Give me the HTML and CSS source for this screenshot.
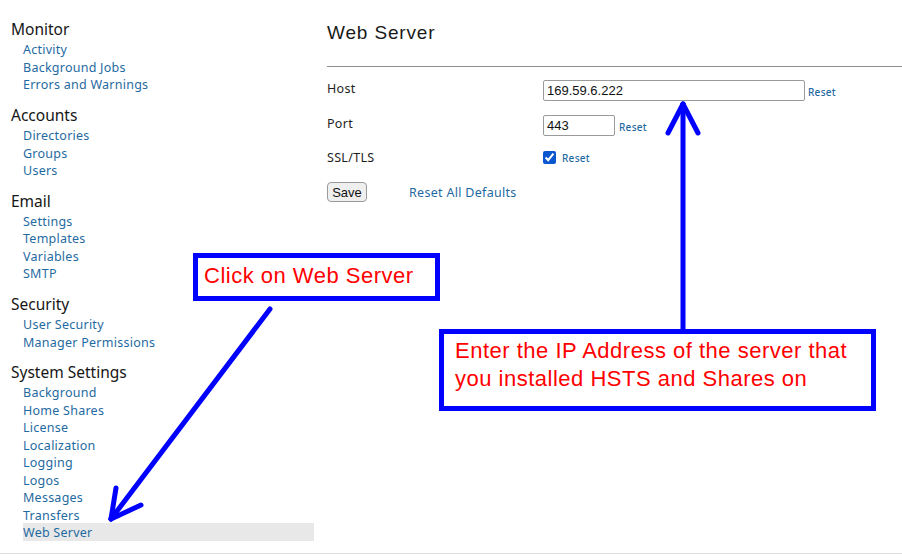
FILE: index.html
```html
<!DOCTYPE html>
<html lang="en">
<head>
<meta charset="utf-8">
<title>Web Server</title>
<link rel="stylesheet" href="styles.css">
</head>
<body>
<div class="page">
  <nav class="sidebar">
    <section class="group">
      <h2>Monitor</h2>
      <ul>
        <li><a href="#">Activity</a></li>
        <li><a href="#">Background Jobs</a></li>
        <li><a href="#">Errors and Warnings</a></li>
      </ul>
    </section>
    <section class="group">
      <h2>Accounts</h2>
      <ul>
        <li><a href="#">Directories</a></li>
        <li><a href="#">Groups</a></li>
        <li><a href="#">Users</a></li>
      </ul>
    </section>
    <section class="group">
      <h2>Email</h2>
      <ul>
        <li><a href="#">Settings</a></li>
        <li><a href="#">Templates</a></li>
        <li><a href="#">Variables</a></li>
        <li><a href="#">SMTP</a></li>
      </ul>
    </section>
    <section class="group">
      <h2>Security</h2>
      <ul>
        <li><a href="#">User Security</a></li>
        <li><a href="#">Manager Permissions</a></li>
      </ul>
    </section>
    <section class="group">
      <h2>System Settings</h2>
      <ul>
        <li><a href="#">Background</a></li>
        <li><a href="#">Home Shares</a></li>
        <li><a href="#">License</a></li>
        <li><a href="#">Localization</a></li>
        <li><a href="#">Logging</a></li>
        <li><a href="#">Logos</a></li>
        <li><a href="#">Messages</a></li>
        <li><a href="#">Transfers</a></li>
        <li class="active"><a href="#">Web Server</a></li>
      </ul>
    </section>
  </nav>
  <main class="content">
    <h1>Web Server</h1>
    <hr class="rule">
    <div class="form">
      <div class="row row-host">
        <label class="label">Host</label>
        <div class="field">
          <input class="text-input host-input" type="text" value="169.59.6.222">
          <a class="reset" href="#">Reset</a>
        </div>
      </div>
      <div class="row row-port">
        <label class="label">Port</label>
        <div class="field">
          <input class="text-input port-input" type="text" value="443">
          <a class="reset" href="#">Reset</a>
        </div>
      </div>
      <div class="row row-ssl">
        <label class="label">SSL/TLS</label>
        <div class="field">
          <input class="check" type="checkbox" checked>
          <a class="reset reset-check" href="#">Reset</a>
        </div>
      </div>
      <div class="row row-actions">
        <button class="save" type="button">Save</button>
        <a class="reset-all" href="#">Reset All Defaults</a>
      </div>
    </div>
  </main>
</div>

<svg class="arrows" width="902" height="560" viewBox="0 0 902 560">
  <g stroke="#0000ff" stroke-width="5" stroke-linecap="round" fill="none">
    <line x1="270" y1="309" x2="111" y2="519"/>
    <line x1="111" y1="519" x2="116" y2="488"/>
    <line x1="111" y1="519" x2="141" y2="505"/>
    <line x1="683" y1="331" x2="683" y2="104"/>
    <line x1="683" y1="104" x2="668" y2="133"/>
    <line x1="683" y1="104" x2="698" y2="133"/>
  </g>
</svg>
<div class="callout callout-click">Click on Web Server</div>
<div class="callout callout-ip">Enter the IP Address of the server that you installed HSTS and Shares on</div>
</body>
</html>
```

FILE: styles.css
```css
* { box-sizing: border-box; }

html, body {
  margin: 0;
  padding: 0;
  background: #ffffff;
}

body {
  width: 902px;
  height: 560px;
  overflow: hidden;
  position: relative;
  font-family: "Noto Sans", "Open Sans", sans-serif;
  color: #161616;
}

.page {
  display: flex;
  height: 554px;
  border-bottom: 1px solid #dedede;
}

/* Sidebar */
.sidebar {
  width: 314px;
  flex: none;
  padding: 19px 0 0 11px;
}

.group + .group {
  margin-top: 12px;
}

.group h2 {
  margin: 0 0 1.25px 0;
  font-size: 15.5px;
  font-weight: 400;
  line-height: 20px;
  color: #161616;
}

.group ul {
  list-style: none;
  margin: 0 0 0 12px;
  padding: 0;
}

.group li {
  height: 17.5px;
  line-height: 17.5px;
}

.group li a {
  font-size: 12.5px;
  color: #1f6aa1;
  text-decoration: none;
  letter-spacing: 0.25px;
}

.group li.active {
  background: #e8e8e8;
}

/* Content */
.content {
  flex: 1;
  padding-left: 13px;
}

.content h1 {
  margin: 21px 0 0 0;
  font-family: "Liberation Sans", Arial, sans-serif;
  font-size: 19px;
  font-weight: 400;
  line-height: 24px;
  color: #1a1a1a;
  letter-spacing: 0.85px;
}

.rule {
  margin: 21px 0 0 0;
  border: 0;
  border-top: 1px solid #8d8d8d;
  height: 0;
}

.form {
  padding-top: 13px;
}

.row {
  display: flex;
  align-items: flex-start;
}

.row-port { margin-top: 14px; }
.row-ssl { margin-top: 14px; }
.row-actions { margin-top: 15px; align-items: center; }

.label {
  width: 216px;
  flex: none;
  font-size: 12.5px;
  line-height: 18px;
  letter-spacing: 0.3px;
  color: #1e1e1e;
}

.row-ssl .label {
  margin-top: -1px;
}

.field {
  display: flex;
  align-items: center;
}

.text-input {
  height: 21px;
  margin: 0;
  padding: 0 3px;
  border: 1px solid #9a9a9a;
  border-radius: 2px;
  font-family: "Liberation Sans", Arial, sans-serif;
  font-size: 13px;
  color: #111;
  background: #fff;
}

.host-input { width: 262px; }
.port-input { width: 72px; }

.reset {
  margin-left: 3px;
  font-size: 10px;
  font-weight: 500;
  letter-spacing: 0.3px;
  color: #1f6aa1;
  text-decoration: none;
  position: relative;
  top: 1px;
}

.port-input + .reset { margin-left: 4px; }

.check {
  width: 13px;
  height: 13px;
  margin: 1px 0 0 0;
  accent-color: #0b57d0;
}

.reset-check {
  margin-left: 6px;
}

.save {
  width: 40px;
  height: 20px;
  margin: 0;
  padding: 0;
  border: 1px solid #9a9a9a;
  border-radius: 4px;
  background: #efefef;
  font-family: "Liberation Sans", Arial, sans-serif;
  font-size: 13px;
  color: #111;
}

.reset-all {
  margin-left: 42px;
  font-size: 12.5px;
  letter-spacing: 0.3px;
  color: #1f6aa1;
  text-decoration: none;
}

/* Annotation overlay */
.arrows {
  position: absolute;
  top: 0;
  left: 0;
  pointer-events: none;
}

.callout {
  position: absolute;
  border: 5px solid #0000ff;
  background: #ffffff;
  color: #ff0000;
  font-family: "Liberation Sans", Arial, sans-serif;
  font-size: 22px;
  letter-spacing: 0.5px;
}

.callout-click {
  left: 193px;
  top: 253px;
  width: 247px;
  height: 48px;
  padding: 5px 0 0 6px;
  line-height: 26px;
}

.callout-ip {
  left: 439px;
  top: 329px;
  width: 437px;
  height: 82px;
  padding: 3px 12px 0 11px;
  line-height: 28px;
}
```
